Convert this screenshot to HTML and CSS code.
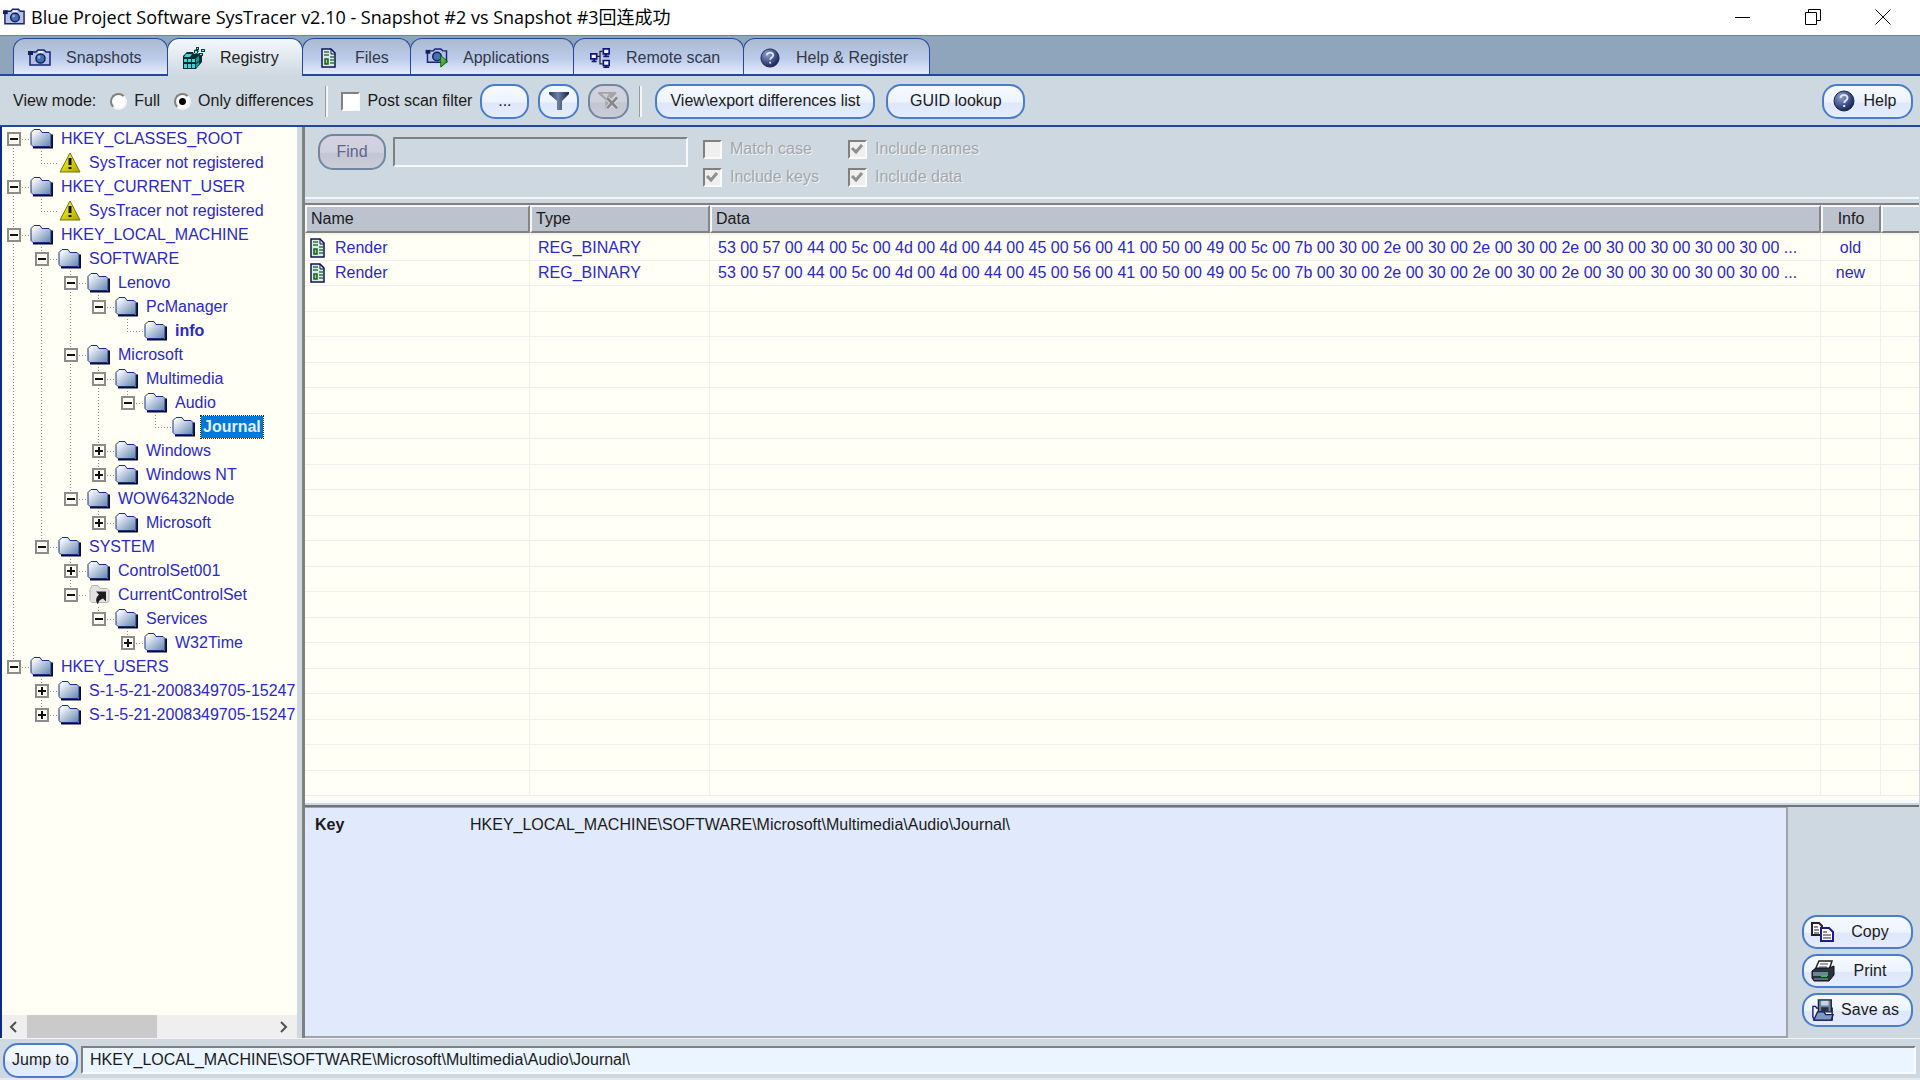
FILE: index.html
```html
<!DOCTYPE html>
<html lang="en">
<head>
<meta charset="utf-8">
<title>Blue Project Software SysTracer v2.10</title>
<link rel="stylesheet" href="styles.css">
</head>
<body>
<svg class="sprite" width="0" height="0" aria-hidden="true">
  <defs>
    <linearGradient id="g-folder" x1="0" y1="0" x2="1" y2="1"><stop offset="0.15" stop-color="#f4f7fb"/><stop offset="1" stop-color="#5f82ad"/></linearGradient>
    <linearGradient id="g-warn" x1="0" y1="0" x2="1" y2="1"><stop offset="0.2" stop-color="#f5f020"/><stop offset="1" stop-color="#a8a400"/></linearGradient>
    <radialGradient id="g-ball" cx="0.35" cy="0.3" r="0.75"><stop offset="0" stop-color="#93a3cd"/><stop offset="0.5" stop-color="#4c5f96"/><stop offset="1" stop-color="#141e50"/></radialGradient>
    <linearGradient id="g-funnel" x1="0" y1="0" x2="1" y2="0"><stop offset="0" stop-color="#2c3758"/><stop offset="0.45" stop-color="#6f7fa6"/><stop offset="1" stop-color="#1d2540"/></linearGradient>
    <linearGradient id="g-play" x1="0" y1="0" x2="1" y2="1"><stop offset="0" stop-color="#7be05a"/><stop offset="1" stop-color="#0b7a0b"/></linearGradient>
  </defs>
  <symbol id="folder" viewBox="0 0 23 20">
    <path d="M3 19h19V6" fill="none" stroke="#0a0a30" stroke-width="2"/>
    <path d="M1 4 4 1h6l2 3h7l2 2v11l-1 1H3l-2-2z" fill="url(#g-folder)" stroke="#1c2c80"/>
  </symbol>
  <symbol id="shortcut" viewBox="0 0 23 20">
    <path d="M3 5 5 1h6l2 3h7l2 2v11l-2 1H5l-2-2z" fill="#e3e3e3" stroke="#b4b4b4"/>
    <path d="M9 7h10v10l-3-3c-3 1-5 3-5 6-3-4-2-7 1-10z" fill="#1c1c1c"/>
  </symbol>
  <symbol id="warning" viewBox="0 0 23 21">
    <path d="M12 1 22 20H2z" fill="url(#g-warn)" stroke="#77750c" stroke-linejoin="round"/>
    <path d="M12 6v7M12 15v2" stroke="#111" stroke-width="3"/>
  </symbol>
  <symbol id="camera" viewBox="0 0 24 18">
    <path d="M2 3h6l2-2h6l2 2h4v13H2z" fill="#b4c0e2" stroke="#17227a" stroke-width="1.500"/>
    <path d="M0 2h5v4H0z" fill="#15205f"/><path d="M10 3h5" stroke="#fff" stroke-width="1.500"/>
    <circle cx="12.500" cy="9.500" r="4.500" fill="#4570b4" stroke="#14205a" stroke-width="1.500"/>
    <circle cx="11" cy="8" r="1.500" fill="#8fb0de"/>
  </symbol>
  <symbol id="camera-play" viewBox="0 0 24 21">
    <path d="M2 3h6l2-2h6l2 2h4v12H2z" fill="#b4c0e2" stroke="#17227a" stroke-width="1.500"/>
    <path d="M0 2h5v4H0z" fill="#15205f"/>
    <circle cx="12" cy="9" r="4.500" fill="#4570b4" stroke="#14205a" stroke-width="1.500"/>
    <path d="M16 8 23 14 16 20z" fill="url(#g-play)" stroke="#0a5a0a"/>
  </symbol>
  <symbol id="registry" viewBox="0 0 24 24">
    <path d="M1 10 5 6h6l1 2 8-1v9l-6 7H1z" fill="#0b2c30"/>
    <path d="M2 13h3v3H2zM6 13h3v3H6zM10 13h3v3h-3zM2 18h3v4H2zM6 18h3v4H6zM10 18h3v4h-3zM4 8h6l-2 3H2z" fill="#3fd4d2"/>
    <path d="M14 12l3-2v5l-3 2zM14 18l3-2v3l-3 3z" fill="#129a9c"/>
    <path d="M12 4l3-1 2 2-2 3-3-1zM14 1h3v3h-3zM19 3h4v3h-4zM17 7h4v3h-4z" fill="#123a3e"/>
    <path d="M13 5h2v2h-2zM15 2h1v1h-1zM20 4h2v1h-2zM18 8h2v1h-2z" fill="#7ff0ee"/>
  </symbol>
  <symbol id="file" viewBox="0 0 16 20">
    <path d="M1 1h9l4 4v14H1z" fill="#dfe8f0" stroke="#0c1450" stroke-width="1.500"/>
    <path d="M10 1v5h4" fill="none" stroke="#0c1450"/>
    <path d="M3 4h5M3 7h5M9 9h4M9 12h4M9 15h4" stroke="#2f7a2f" stroke-width="1.500"/>
    <path d="M4 11h3v5H4z" fill="#8fd08f" stroke="#176017" stroke-width="1.500"/>
  </symbol>
  <symbol id="network" viewBox="0 0 24 24">
    <path d="M8 10h4M15 4h-3v15h3" fill="none" stroke="#222" stroke-width="1.500"/>
    <g fill="#f4f7fd" stroke="#14147c" stroke-width="2"><path d="M1 7h7v6H1zM16 1h7v6h-7zM16 15h7v6h-7z"/></g>
    <path d="M2 16h6M16 10h7M16 23h7M5 13v3M19 7v3M19 21v2" stroke="#14147c" stroke-width="2"/>
  </symbol>
  <symbol id="help" viewBox="0 0 22 22">
    <circle cx="11" cy="11" r="10" fill="url(#g-ball)" stroke="#1d2649"/>
    <path d="M7.500 8c.3-4 7.200-4 7 0 0 2.500-3.300 2.500-3.300 5M11.200 15v2" fill="none" stroke="#dfe5f5" stroke-width="2"/>
  </symbol>
  <symbol id="funnel" viewBox="0 0 20 18">
    <path d="M0 0h20v2l-7 7v9H8V9L0 2z" fill="url(#g-funnel)"/>
  </symbol>
  <symbol id="funnel-off" viewBox="0 0 24 20">
    <path d="M0 0h20v2l-7 7v9H8V9L0 2z" fill="#a5a5a8"/><path d="M4 2h8L9 7z" fill="#cfcfd2"/>
    <path d="M10 18 21 6M10 7l11 11" stroke="#dcdce0" stroke-width="5"/>
    <path d="M10 18 21 6M10 7l11 11" stroke="#88888c" stroke-width="3"/>
  </symbol>
  <symbol id="copy" viewBox="0 0 24 20">
    <g fill="#fff" stroke-width="2"><path d="M1 1h7l3 3v9H1z" stroke="#222"/><path d="M10 6h8l4 4v9H10z" stroke="#1c1c8c"/></g>
    <path d="M3 5h4M3 8h5M3 11h5" stroke="#222"/><path d="M12 10h4M12 13h8M12 16h8" stroke="#222"/>
  </symbol>
  <symbol id="print" viewBox="0 0 24 22">
    <path d="M8 1h13l-3 9H4z" fill="#fff" stroke="#222" stroke-width="1.500"/><path d="M9 4h8M8 7h8" stroke="#444"/>
    <path d="M1 11 5 8h13l5-2v9l-5 6H3l-2-3z" fill="#26323f" stroke="#111"/>
    <path d="M2 12h15v4H2z" fill="#6d8496"/><path d="M10 16h6" stroke="#34c834" stroke-width="2"/><path d="M3 19h14" stroke="#8fa3b3"/>
  </symbol>
  <symbol id="save" viewBox="0 0 24 24">
    <path d="M1 8h3l1 2h17v13H3L1 20z" fill="#f0f4fc" stroke="#17176c" stroke-width="1.500"/>
    <path d="M7 1h14v13H7z" fill="#6b87a5" stroke="#1a2230" stroke-width="1.500"/><path d="M10 2h8v5h-8z" fill="#c8d6e4"/><path d="M10 9h8v4h-8z" fill="#26303e"/>
    <path d="M6 14h7l2 3h8l-2 6H2z" fill="#7d98ba" stroke="#17176c" stroke-width="1.500"/>
  </symbol>
</svg>

<header class="titlebar">
  <svg class="app-icon"><use href="#camera"/></svg>
  <h1 class="title">Blue Project Software SysTracer v2.10 - Snapshot #2 vs Snapshot #3回连成功</h1>
  <div class="window-controls">
    <button aria-label="Minimize"><svg viewBox="0 0 16 16"><path d="M0 8.500h15"/></svg></button>
    <button aria-label="Restore"><svg viewBox="0 0 16 16"><path d="M.5 3.500h11v12H.5zM3.500 3.500v-3h12v11h-4"/></svg></button>
    <button aria-label="Close"><svg viewBox="0 0 16 16"><path d="M.5.500l15 15M15.500.500l-15 15"/></svg></button>
  </div>
</header>

<nav class="tabs" role="tablist">
  <button class="tab" role="tab"><svg class="tab-icon"><use href="#camera"/></svg>Snapshots</button>
  <button class="tab active" role="tab" aria-selected="true"><svg class="tab-icon"><use href="#registry"/></svg>Registry</button>
  <button class="tab" role="tab"><svg class="tab-icon"><use href="#file"/></svg>Files</button>
  <button class="tab" role="tab"><svg class="tab-icon"><use href="#camera-play"/></svg>Applications</button>
  <button class="tab" role="tab"><svg class="tab-icon"><use href="#network"/></svg>Remote scan</button>
  <button class="tab" role="tab"><svg class="tab-icon"><use href="#help"/></svg>Help &amp; Register</button>
</nav>

<div class="toolbar">
  <div class="view-mode" role="radiogroup" aria-labelledby="vm">
    <span id="vm">View mode:</span>
    <label><input class="radio" type="radio" name="mode">Full</label>
    <label><input class="radio" type="radio" name="mode" checked>Only differences</label>
  </div>
  <span class="separator"></span>
  <label class="post-scan"><input class="check" type="checkbox">Post scan filter</label>
  <div class="filter-buttons">
    <button class="btn more">...</button>
    <button class="btn icon-only" aria-label="Filter"><svg class="funnel"><use href="#funnel"/></svg></button>
    <button class="btn icon-only" aria-label="Clear filter" disabled><svg class="funnel"><use href="#funnel-off"/></svg></button>
  </div>
  <span class="separator"></span>
  <div class="actions">
    <button class="btn export">View\export differences list</button>
    <button class="btn guid">GUID lookup</button>
  </div>
  <button class="btn help"><svg class="ball"><use href="#help"/></svg><span>Help</span></button>
</div>

<main class="workspace">
  <aside class="sidebar">
    <ul class="tree">
      <li><div class="node"><i class="box minus"></i><svg><use href="#folder"/></svg><span>HKEY_CLASSES_ROOT</span></div>
        <ul class="branch"><li><div class="node leaf"><svg><use href="#warning"/></svg><span>SysTracer not registered</span></div></li></ul></li>
      <li><div class="node"><i class="box minus"></i><svg><use href="#folder"/></svg><span>HKEY_CURRENT_USER</span></div>
        <ul class="branch"><li><div class="node leaf"><svg><use href="#warning"/></svg><span>SysTracer not registered</span></div></li></ul></li>
      <li><div class="node"><i class="box minus"></i><svg><use href="#folder"/></svg><span>HKEY_LOCAL_MACHINE</span></div>
        <ul class="branch">
          <li><div class="node"><i class="box minus"></i><svg><use href="#folder"/></svg><span>SOFTWARE</span></div>
            <ul class="branch wide">
              <li><div class="node"><i class="box minus"></i><svg><use href="#folder"/></svg><span>Lenovo</span></div>
                <ul class="branch">
                  <li><div class="node"><i class="box minus"></i><svg><use href="#folder"/></svg><span>PcManager</span></div>
                    <ul class="branch wide"><li><div class="node leaf"><svg><use href="#folder"/></svg><b>info</b></div></li></ul></li>
                </ul></li>
              <li><div class="node"><i class="box minus"></i><svg><use href="#folder"/></svg><span>Microsoft</span></div>
                <ul class="branch">
                  <li><div class="node"><i class="box minus"></i><svg><use href="#folder"/></svg><span>Multimedia</span></div>
                    <ul class="branch wide">
                      <li><div class="node"><i class="box minus"></i><svg><use href="#folder"/></svg><span>Audio</span></div>
                        <ul class="branch"><li><div class="node leaf"><svg><use href="#folder"/></svg><b class="selected">Journal</b></div></li></ul></li>
                    </ul></li>
                  <li><div class="node"><i class="box plus"></i><svg><use href="#folder"/></svg><span>Windows</span></div></li>
                  <li><div class="node"><i class="box plus"></i><svg><use href="#folder"/></svg><span>Windows NT</span></div></li>
                </ul></li>
              <li><div class="node"><i class="box minus"></i><svg><use href="#folder"/></svg><span>WOW6432Node</span></div>
                <ul class="branch"><li><div class="node"><i class="box plus"></i><svg><use href="#folder"/></svg><span>Microsoft</span></div></li></ul></li>
            </ul></li>
          <li><div class="node"><i class="box minus"></i><svg><use href="#folder"/></svg><span>SYSTEM</span></div>
            <ul class="branch wide">
              <li><div class="node"><i class="box plus"></i><svg><use href="#folder"/></svg><span>ControlSet001</span></div></li>
              <li><div class="node"><i class="box minus"></i><svg><use href="#shortcut"/></svg><span>CurrentControlSet</span></div>
                <ul class="branch">
                  <li><div class="node"><i class="box minus"></i><svg><use href="#folder"/></svg><span>Services</span></div>
                    <ul class="branch wide"><li><div class="node"><i class="box plus"></i><svg><use href="#folder"/></svg><span>W32Time</span></div></li></ul></li>
                </ul></li>
            </ul></li>
        </ul></li>
      <li><div class="node"><i class="box minus"></i><svg><use href="#folder"/></svg><span>HKEY_USERS</span></div>
        <ul class="branch">
          <li><div class="node"><i class="box plus"></i><svg><use href="#folder"/></svg><span>S-1-5-21-2008349705-15247</span></div></li>
          <li><div class="node"><i class="box plus"></i><svg><use href="#folder"/></svg><span>S-1-5-21-2008349705-15247</span></div></li>
        </ul></li>
    </ul>
    <div class="scrollbar">
      <svg viewBox="0 0 10 12"><path d="M8 1 3 6l5 5"/></svg>
      <div class="track"><div class="thumb"></div></div>
      <svg viewBox="0 0 10 12"><path d="M2 1l5 5-5 5"/></svg>
    </div>
  </aside>

  <section class="content">
    <form class="find">
      <button class="btn find-btn" type="button" disabled>Find</button>
      <input class="find-input" type="text" aria-label="Find text" disabled>
      <div class="find-options">
        <label><input class="check" type="checkbox" disabled>Match case</label>
        <label><input class="check" type="checkbox" disabled checked>Include names</label>
        <label><input class="check" type="checkbox" disabled checked>Include keys</label>
        <label><input class="check" type="checkbox" disabled checked>Include data</label>
      </div>
    </form>

    <div class="list">
      <table class="values">
        <colgroup><col class="c-name"><col class="c-type"><col><col class="c-info"><col class="c-rest"></colgroup>
        <thead><tr><th>Name</th><th>Type</th><th>Data</th><th class="center">Info</th><th class="rest"></th></tr></thead>
        <tbody>
          <tr><td class="name"><div><svg><use href="#file"/></svg>Render</div></td><td>REG_BINARY</td><td>53 00 57 00 44 00 5c 00 4d 00 4d 00 44 00 45 00 56 00 41 00 50 00 49 00 5c 00 7b 00 30 00 2e 00 30 00 2e 00 30 00 2e 00 30 00 30 00 30 00 30 00 ...</td><td class="center">old</td><td></td></tr>
          <tr><td class="name"><div><svg><use href="#file"/></svg>Render</div></td><td>REG_BINARY</td><td>53 00 57 00 44 00 5c 00 4d 00 4d 00 44 00 45 00 56 00 41 00 50 00 49 00 5c 00 7b 00 30 00 2e 00 30 00 2e 00 30 00 2e 00 30 00 30 00 30 00 30 00 ...</td><td class="center">new</td><td></td></tr>
          <tr><td></td><td></td><td></td><td></td><td></td></tr>
          <tr><td></td><td></td><td></td><td></td><td></td></tr>
          <tr><td></td><td></td><td></td><td></td><td></td></tr>
          <tr><td></td><td></td><td></td><td></td><td></td></tr>
          <tr><td></td><td></td><td></td><td></td><td></td></tr>
          <tr><td></td><td></td><td></td><td></td><td></td></tr>
          <tr><td></td><td></td><td></td><td></td><td></td></tr>
          <tr><td></td><td></td><td></td><td></td><td></td></tr>
          <tr><td></td><td></td><td></td><td></td><td></td></tr>
          <tr><td></td><td></td><td></td><td></td><td></td></tr>
          <tr><td></td><td></td><td></td><td></td><td></td></tr>
          <tr><td></td><td></td><td></td><td></td><td></td></tr>
          <tr><td></td><td></td><td></td><td></td><td></td></tr>
          <tr><td></td><td></td><td></td><td></td><td></td></tr>
          <tr><td></td><td></td><td></td><td></td><td></td></tr>
          <tr><td></td><td></td><td></td><td></td><td></td></tr>
          <tr><td></td><td></td><td></td><td></td><td></td></tr>
          <tr><td></td><td></td><td></td><td></td><td></td></tr>
          <tr><td></td><td></td><td></td><td></td><td></td></tr>
          <tr><td></td><td></td><td></td><td></td><td></td></tr>
        </tbody>
      </table>
    </div>

    <div class="details">
      <dl class="info">
        <dt>Key</dt><dd>HKEY_LOCAL_MACHINE\SOFTWARE\Microsoft\Multimedia\Audio\Journal\</dd>
      </dl>
      <div class="side-buttons">
        <button class="btn side"><svg><use href="#copy"/></svg><span>Copy</span></button>
        <button class="btn side"><svg><use href="#print"/></svg><span>Print</span></button>
        <button class="btn side"><svg><use href="#save"/></svg><span>Save as</span></button>
      </div>
    </div>
  </section>
</main>

<footer class="jump">
  <button class="btn jump-btn">Jump to</button>
  <input class="jump-input" type="text" aria-label="Registry path" value="HKEY_LOCAL_MACHINE\SOFTWARE\Microsoft\Multimedia\Audio\Journal\">
</footer>
</body>
</html>
```
FILE: styles.css
```css
:root {
  --panel: #ced8e1;
  --navy: #24479b;
  --cream: #fffff6;
  --ink: #2a28c8;
  --gray: #808080;
}

* { box-sizing: border-box; }

body {
  margin: 0;
  height: 100vh;
  display: flex;
  flex-direction: column;
  overflow: hidden;
  background: var(--panel);
  color: #1a1a1a;
  font: 16px/20px "Liberation Sans", Arial, "Noto Sans CJK SC", sans-serif;
}

button, input { font: inherit; color: inherit; }
button { padding: 0; border: 0; background: none; white-space: nowrap; }
ul, dl, dd { margin: 0; padding: 0; list-style: none; }
svg { flex: none; }
.sprite { display: block; position: absolute; }

/* Title bar */
.titlebar {
  flex: none;
  height: 35px;
  display: flex;
  align-items: center;
  padding: 0 2px 2px 3px;
  gap: 5px;
  background: #fff;
  color: #000;
}
.app-icon { width: 23px; height: 18px; }
.title {
  flex: 1;
  margin: 0;
  font: 400 18px/24px "Open Sans", "Noto Sans CJK SC", sans-serif;
}
.window-controls { display: flex; }
.window-controls button { width: 70px; height: 33px; display: grid; place-items: center; }
.window-controls svg { width: 16px; height: 16px; fill: none; stroke: #000; }

/* Tabs */
.tabs {
  flex: none;
  height: 41px;
  display: grid;
  grid-template-columns: 154px 135px 108px 163px 170px 186px;
  padding: 2px 0 0 13px;
  border-top: 1px solid #708499;
  background: linear-gradient(var(--navy), var(--navy)) 0 100% / 100% 2px no-repeat #8fa5bb;
}
.tab {
  height: 36px;
  display: flex;
  align-items: center;
  gap: 14px;
  padding: 2px 0 0 14px;
  margin-right: -1px;
  border: 1px solid var(--navy);
  border-bottom: 0;
  border-radius: 12px 12px 0 0;
  background: linear-gradient(#a9bad0, #bccbea 55%, #e4ebfa);
  color: #33384a;
}
.tab.active { height: 38px; background: linear-gradient(#f4f8fc, var(--panel)); color: #222; padding-top: 0; }
.tab-icon { width: 24px; height: 20px; }
.active .tab-icon { height: 24px; }

/* Shared controls */
.btn {
  height: 35px;
  border: 2px solid #4a7ccc;
  border-radius: 15px;
  background: linear-gradient(#f6faff, #edf4ff 50%, #dfe7fb 55%, #e3ebfd);
  display: flex;
  align-items: center;
  justify-content: center;
}
.btn:disabled {
  border-color: #70879f;
  background: linear-gradient(#d4d2e0, #d0cfdd 50%, #c4c5d3 55%, #cbccd8);
  color: #60648c;
}
.check, .radio { appearance: none; margin: 0; flex: none; }
.check {
  width: 19px;
  height: 19px;
  border: 2px solid;
  border-color: var(--gray) #fafafa #fafafa var(--gray);
  background: #fff;
}
.check:disabled { background: #efefef; }
.check:checked { background: #efefef url("data:image/svg+xml,%3Csvg xmlns='http://www.w3.org/2000/svg' viewBox='0 0 15 15'%3E%3Cpath d='M2 6l4 4 6-7' fill='none' stroke='%23909090' stroke-width='3'/%3E%3C/svg%3E") center / 15px; }
.radio {
  width: 17px;
  height: 17px;
  border-radius: 50%;
  border: 2px solid;
  border-color: var(--gray) #f4f4f4 #f4f4f4 var(--gray);
  background: #fff;
}
.radio:checked { background: radial-gradient(circle, #000 3px, #fff 4px); }
label { display: flex; align-items: center; gap: 7px; white-space: nowrap; }

/* Toolbar */
.toolbar {
  flex: none;
  height: 51px;
  display: flex;
  align-items: center;
  padding: 1px 7px 0 13px;
  border-bottom: 2px solid var(--navy);
}
.view-mode { display: flex; gap: 14px; margin-right: 12px; }
.separator { width: 3px; height: 31px; border-left: 1px solid #9a9a9a; border-right: 2px solid #f3f5f7; }
.post-scan { margin: 0 8px 0 13px; }
.filter-buttons { display: flex; gap: 9px; margin-right: 10px; }
.actions { display: flex; gap: 11px; margin-left: 13px; }
.more { width: 49px; }
.icon-only { width: 41px; }
.funnel { width: 22px; height: 18px; }
.export { width: 220px; }
.guid { width: 139px; }
.help { width: 91px; margin-left: auto; gap: 9px; padding-right: 6px; }
.ball { width: 22px; height: 22px; }

/* Workspace */
.workspace { flex: 1; min-height: 0; display: flex; }
.sidebar {
  flex: none;
  width: 297px;
  display: flex;
  flex-direction: column;
  border-left: 2px solid #0c2a80;
  background: var(--cream);
  overflow: hidden;
}

/* Tree: each item paints its own vertical guide, each row its horizontal one */
.tree { flex: 1; min-height: 0; overflow: hidden; color: var(--ink); margin-right: 2px; }
.tree li { background: repeating-linear-gradient(#8a8a8a 0 1px, transparent 1px 3px) 11px 0 / 1px 100% no-repeat; }
.tree > li:first-child { background-position-y: 12px; }
.tree li:last-child { background-size: 1px 12px; }
.branch { padding-left: 28px; }
.branch.wide { padding-left: 29px; }
.node {
  height: 24px;
  display: flex;
  align-items: center;
  padding-left: 5px;
  white-space: nowrap;
  background: repeating-linear-gradient(90deg, #8a8a8a 0 1px, transparent 1px 3px) 11px 12px / 16px 1px no-repeat;
}
.node.leaf { padding-left: 28px; }
.node svg { width: 23px; height: 21px; margin: 0 6px 2px 0; }
.node span, .node b { padding: 0 2px; line-height: 22px; }
.box {
  flex: none;
  width: 14px;
  height: 14px;
  margin-right: 9px;
  border: 2px solid #8c8c8c;
  background: linear-gradient(#111, #111) center / 8px 2px no-repeat var(--cream);
}
.box.plus {
  background: linear-gradient(#111, #111) center / 8px 2px no-repeat,
    linear-gradient(#111, #111) center / 2px 8px no-repeat var(--cream);
}
.selected { background: #0078d7; color: #e4efff; outline: 1px dotted #3a2410; }

.scrollbar { flex: none; height: 23px; display: flex; align-items: center; gap: 9px; padding: 0 8px 0 6px; background: #efefef; }
.scrollbar svg { width: 10px; height: 12px; fill: none; stroke: #505050; stroke-width: 2; }
.track { flex: 1; height: 100%; }
.thumb { width: 130px; height: 100%; background: #cacaca; }

/* Right side */
.content {
  flex: 1;
  min-width: 0;
  display: flex;
  flex-direction: column;
  margin: 0 1px 0 5px;
  border-left: 3px solid var(--gray);
}
.find {
  flex: none;
  height: 76px;
  display: flex;
  align-items: flex-start;
  padding: 7px 13px;
  box-shadow: inset 0 -4px var(--panel), inset 0 -6px #f5f6f8;
}
.find-btn { width: 68px; height: 36px; }
.find-input {
  width: 295px;
  height: 30px;
  margin: 3px 15px 0 7px;
  border: 2px solid;
  border-color: var(--gray) #f6f8fa #f6f8fa var(--gray);
  background: var(--panel);
}
.find-options { display: grid; grid-template-columns: 145px auto; row-gap: 8px; padding-top: 5px; color: #a3a7ab; text-shadow: 1px 1px #f4f4f4; }
.find-options label { height: 20px; gap: 8px; }

.list {
  flex: none;
  height: 600px;
  border-top: 2px solid var(--gray);
  border-bottom: 3px solid #f7f9fa;
  background: var(--cream);
  overflow: hidden;
}
.values { width: 100%; table-layout: fixed; border-collapse: separate; border-spacing: 0; }
.c-name { width: 225px; }
.c-type { width: 180px; }
.c-info { width: 60px; }
.c-rest { width: 38px; }
.values th {
  height: 28px;
  padding: 0 4px;
  text-align: left;
  font-weight: 400;
  border: 2px solid;
  border-color: #f6f6f6 #858585 #808080 #f6f6f6;
  background: #bcc3cf;
}
.values th.rest { background: var(--panel); border-right: 0; }
.values tbody tr:first-child td { height: 28px; border-top: 2px solid #f4f4ee; }
.values td {
  height: 26px;
  padding: 0 8px;
  color: var(--ink);
  white-space: nowrap;
  border-right: 1px solid #efefef;
  border-bottom: 1px solid #efefef;
}
.values td:last-child { border-right: 0; }
.values tbody tr:nth-child(even) td { height: 25px; }
.values .center { text-align: center; padding: 0; }
.values td.name { padding: 0 5px; }
.name div { display: flex; align-items: center; gap: 9px; }
.name svg { width: 16px; height: 20px; }

.details { flex: 1; min-height: 0; display: flex; border-top: 2px solid #707478; margin-top: 2px; }
.info {
  flex: 1;
  display: grid;
  grid-template-columns: 155px 1fr;
  align-content: start;
  padding: 7px 10px;
  background: #e1eafc;
  border: 1px solid #a0a4a8;
  border-width: 1px 2px 2px 0;
}
.info dt { font-weight: 700; }
.side-buttons { flex: none; width: 131px; display: flex; flex-direction: column; justify-content: flex-end; gap: 5px; padding: 0 6px 11px 14px; }
.side { height: 34px; justify-content: flex-start; padding-left: 7px; }
.side svg { width: 24px; height: 22px; }
.side span { flex: 1; padding-right: 6px; text-align: center; }

/* Footer */
.jump {
  flex: none;
  height: 42px;
  display: flex;
  align-items: center;
  gap: 3px;
  padding: 3px 4px 0 3px;
  border-top: 1px solid #f0f4f7;
  border-bottom: 2px solid #e3e9ef;
}
.jump-btn { width: 75px; }
.jump-input {
  flex: 1;
  height: 28px;
  padding: 0 7px;
  border: 2px solid;
  border-color: var(--gray) #f8fafc #f8fafc var(--gray);
  background: #eaf5ff;
}
```
